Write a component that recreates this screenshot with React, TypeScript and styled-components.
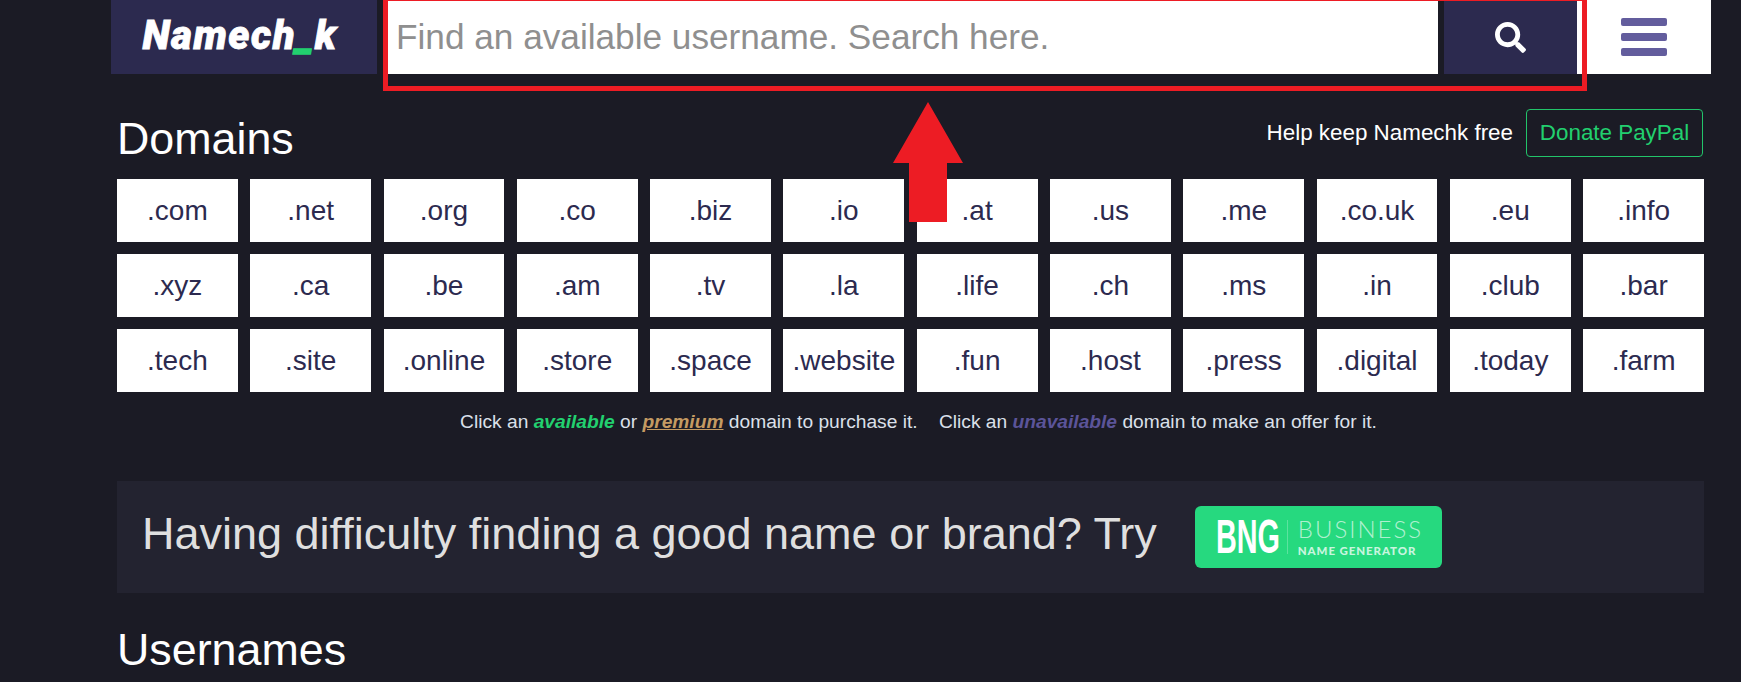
import React from "react";
import styled, { createGlobalStyle } from "styled-components";
import { FaSearch } from "react-icons/fa";

const domains = [
  ".com", ".net", ".org", ".co", ".biz", ".io", ".at", ".us", ".me", ".co.uk", ".eu", ".info",
  ".xyz", ".ca", ".be", ".am", ".tv", ".la", ".life", ".ch", ".ms", ".in", ".club", ".bar",
  ".tech", ".site", ".online", ".store", ".space", ".website", ".fun", ".host", ".press", ".digital", ".today", ".farm",
];

export default function App() {
  return (
    <Page>
      <GlobalStyle />
      <Header>
        <Logo>
          Namech<LogoMark>_</LogoMark>k
        </Logo>
        <SearchInput placeholder="Find an available username. Search here." />
        <SearchButton aria-label="Search">
          <FaSearch size={31} color="#fff" />
        </SearchButton>
        <MenuButton aria-label="Menu">
          <MenuBar />
          <MenuBar />
          <MenuBar />
        </MenuButton>
      </Header>

      <Content>
        <TitleRow>
          <Heading>Domains</Heading>
          <Donate>
            <DonateText>Help keep Namechk free</DonateText>
            <DonateButton>Donate PayPal</DonateButton>
          </Donate>
        </TitleRow>

        <DomainGrid>
          {domains.map((domain) => (
            <DomainTile key={domain}>{domain}</DomainTile>
          ))}
        </DomainGrid>

        <Note>
          Click an <Available>available</Available> or <Premium>premium</Premium> domain to purchase it.
          {"\u00a0\u00a0\u00a0\u00a0"}Click an <Unavailable>unavailable</Unavailable> domain to make an offer for it.
        </Note>

        <Banner>
          <BannerText>Having difficulty finding a good name or brand? Try</BannerText>
          <BngBadge>
            <BngMark>BNG</BngMark>
            <BngDivider />
            <BngWords>
              <BngTop>BUSINESS</BngTop>
              <BngBottom>NAME GENERATOR</BngBottom>
            </BngWords>
          </BngBadge>
        </Banner>

        <UsernamesHeading>Usernames</UsernamesHeading>
      </Content>

      {/* annotation drawn over the page */}
      <Highlight />
      <Arrow viewBox="0 0 70 120" aria-hidden="true">
        <polygon points="35,0 70,61 54,61 54,120 16,120 16,61 0,61" fill="#ed1c24" />
      </Arrow>
    </Page>
  );
}

const GlobalStyle = createGlobalStyle`
  html, body {
    margin: 0;
    height: 100%;
    overflow: hidden;
    background: #1b1b25;
  }
  * {
    box-sizing: border-box;
  }
`;

const Page = styled.div`
  position: relative;
  width: 1741px;
  height: 682px;
  overflow: hidden;
  padding-left: 111px;
  font-family: "Liberation Sans", Arial, sans-serif;
  color: #fff;
`;

const Header = styled.div`
  display: flex;
  width: 1600px;
  height: 74px;
`;

const Logo = styled.div`
  width: 266px;
  margin-right: 7px;
  padding: 0 8px 3px 0;
  display: flex;
  align-items: center;
  justify-content: center;
  background: #2c2a4f;
  color: #fff;
  font-family: Roboto, "Open Sans", sans-serif;
  font-weight: 900;
  font-style: italic;
  font-size: 40px;
  letter-spacing: 1.5px;
  -webkit-text-stroke: 0.8px #fff;
`;

const LogoMark = styled.span`
  color: #22d06f;
  -webkit-text-stroke: 1.6px #22d06f;
`;

const SearchInput = styled.input`
  flex: 1;
  min-width: 0;
  height: 74px;
  border: 0;
  outline: 0;
  padding: 0 0 0 12px;
  background: #fff;
  font-family: "Liberation Sans", Arial, sans-serif;
  font-size: 35.2px;

  &::placeholder {
    color: #8f8f8f;
    opacity: 1;
  }
`;

const SearchButton = styled.div`
  width: 133px;
  margin-left: 6px;
  display: flex;
  align-items: center;
  justify-content: center;
  background: #2c2a4f;
`;

const MenuButton = styled.div`
  width: 134px;
  display: flex;
  flex-direction: column;
  align-items: center;
  justify-content: center;
  gap: 7px;
  background: #fff;
`;

const MenuBar = styled.span`
  width: 46px;
  height: 8px;
  border-radius: 2px;
  background: #635d9d;
`;

const Content = styled.div`
  width: 1587px;
  margin-left: 6px;
`;

const TitleRow = styled.div`
  display: flex;
  align-items: center;
  justify-content: space-between;
  height: 105px;
  padding-top: 22px;
`;

const Heading = styled.h2`
  margin: 0;
  font-size: 44.8px;
  font-weight: 400;
  line-height: 50px;
`;

const Donate = styled.div`
  display: flex;
  align-items: center;
  gap: 13px;
  margin-right: 1px;
  margin-top: -10px;
`;

const DonateText = styled.span`
  font-size: 22.4px;
`;

const DonateButton = styled.div`
  width: 177px;
  height: 48px;
  display: flex;
  align-items: center;
  justify-content: center;
  border: 1px solid #22c46a;
  border-radius: 4px;
  color: #22d06f;
  font-size: 22.4px;
`;

const DomainGrid = styled.div`
  display: grid;
  grid-template-columns: repeat(12, 1fr);
  column-gap: 12.5px;
  row-gap: 12px;
`;

const DomainTile = styled.div`
  height: 63px;
  display: flex;
  align-items: center;
  justify-content: center;
  background: #fff;
  color: #2c2a4f;
  font-size: 28px;
`;

const Note = styled.p`
  margin: 17px 0 0;
  height: 25px;
  padding-left: 16px;
  text-align: center;
  font-size: 19.2px;
  line-height: 25px;
  color: #dbe0ea;
`;

const Available = styled.b`
  font-style: italic;
  color: #22d06f;
`;

const Premium = styled.b`
  font-style: italic;
  text-decoration: underline;
  color: #c49a62;
`;

const Unavailable = styled.b`
  font-style: italic;
  color: #5b5499;
`;

const Banner = styled.div`
  height: 112px;
  margin-top: 47px;
  padding-left: 25px;
  display: flex;
  align-items: center;
  gap: 38px;
  background: #232330;
`;

const BannerText = styled.span`
  font-size: 45px;
  margin-top: -6px;
  color: #dfdfdf;
`;

const BngBadge = styled.div`
  width: 247px;
  height: 62px;
  display: flex;
  align-items: center;
  padding-left: 21px;
  border-radius: 6px;
  background: #26d97f;
`;

const BngMark = styled.span`
  width: 61px;
  font-family: "Liberation Sans", Arial, sans-serif;
  font-weight: 700;
  font-size: 48px;
  line-height: 48px;
  color: #fff;
  transform: scaleX(0.6);
  transform-origin: left center;
  white-space: nowrap;
`;

const BngDivider = styled.span`
  width: 1px;
  height: 34px;
  margin: 0 10px 0 10px;
  background: rgba(255, 255, 255, 0.25);
`;

const BngWords = styled.div`
  display: flex;
  flex-direction: column;
  gap: 5px;
`;

const BngTop = styled.span`
  font-family: Lato, sans-serif;
  font-size: 24px;
  line-height: 22px;
  font-weight: 300;
  letter-spacing: 2px;
  color: rgba(255, 255, 255, 0.65);
`;

const BngBottom = styled.span`
  font-family: Lato, sans-serif;
  font-size: 11.5px;
  line-height: 12px;
  font-weight: 900;
  letter-spacing: 0.9px;
  color: rgba(255, 255, 255, 0.75);
`;

const UsernamesHeading = styled(Heading)`
  margin-top: 31px;
`;

const Highlight = styled.div`
  position: absolute;
  left: 383px;
  top: -4px;
  width: 1204px;
  height: 95px;
  border: 5px solid #ed1c24;
  pointer-events: none;
`;

const Arrow = styled.svg`
  position: absolute;
  left: 893px;
  top: 102px;
  width: 70px;
  height: 120px;
`;
